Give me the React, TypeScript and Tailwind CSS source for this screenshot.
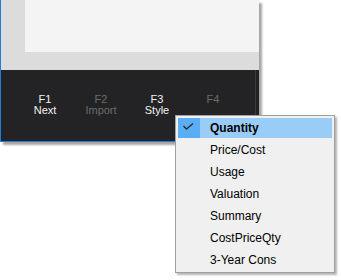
const keys = [
  { key: "F1", label: "Next", enabled: true },
  { key: "F2", label: "Import", enabled: false },
  { key: "F3", label: "Style", enabled: true },
  { key: "F4", label: "", enabled: false },
]

const items = ["Quantity", "Price/Cost", "Usage", "Valuation", "Summary", "CostPriceQty", "3-Year Cons"]

export default function App() {
  return (
    <div
      className="relative w-[341px] h-[280px] bg-white overflow-hidden"
      style={{ fontFamily: '"Liberation Sans", Arial, sans-serif' }}
    >
      {/* Window */}
      <div className="w-[259px] h-[142px] flex flex-col border-l border-b border-[#1e7fd8] shadow-[3px_3px_2px_rgba(0,0,0,0.35)]">
        <div className="h-[70px] bg-[#dcdcdc] pl-[24px] pb-[18px] flex">
          <div className="flex-1 bg-[#f4f4f4]" />
        </div>
        <div className="flex-1 bg-[#232325] flex">
          <div className="flex-1 flex pl-[16px] pt-[24px]">
            {keys.map((k) => (
              <div
                key={k.key}
                className={`w-[56px] flex flex-col items-center text-[11px] leading-[11px] ${
                  k.enabled ? "text-[#f2f2f2]" : "text-[#6b6b6b]"
                }`}
              >
                <span>{k.key}</span>
                <span>{k.label}</span>
              </div>
            ))}
          </div>
          <div className="w-px bg-[#3a3a3c] mr-[3px]" />
        </div>
      </div>

      {/* Context menu */}
      <div className="absolute left-[175px] top-[115px] w-[160px] bg-[#f0f0f0] border border-[#a0a0a0] px-[2px] py-[1px] shadow-[2px_2px_2px_rgba(0,0,0,0.3)]">
        {items.map((item, i) => (
          <div key={item} className="h-[22px] py-[1px]">
            <div className={`h-[20px] flex items-center ${i === 0 ? "bg-[#99cdf8]" : ""}`}>
              <div className={`w-[22px] h-full flex items-center justify-center ${i === 0 ? "bg-[#5aaef6]" : ""}`}>
                {i === 0 && (
                  <svg width="22" height="20" viewBox="0 0 22 20">
                    <polyline points="5.5,8 8.5,11 15,5.5" fill="none" stroke="#2b2b2b" strokeWidth="1.4" />
                  </svg>
                )}
              </div>
              <span className={`ml-[10px] text-[12px] text-black ${i === 0 ? "font-bold" : ""}`}>{item}</span>
            </div>
          </div>
        ))}
      </div>
    </div>
  )
}
